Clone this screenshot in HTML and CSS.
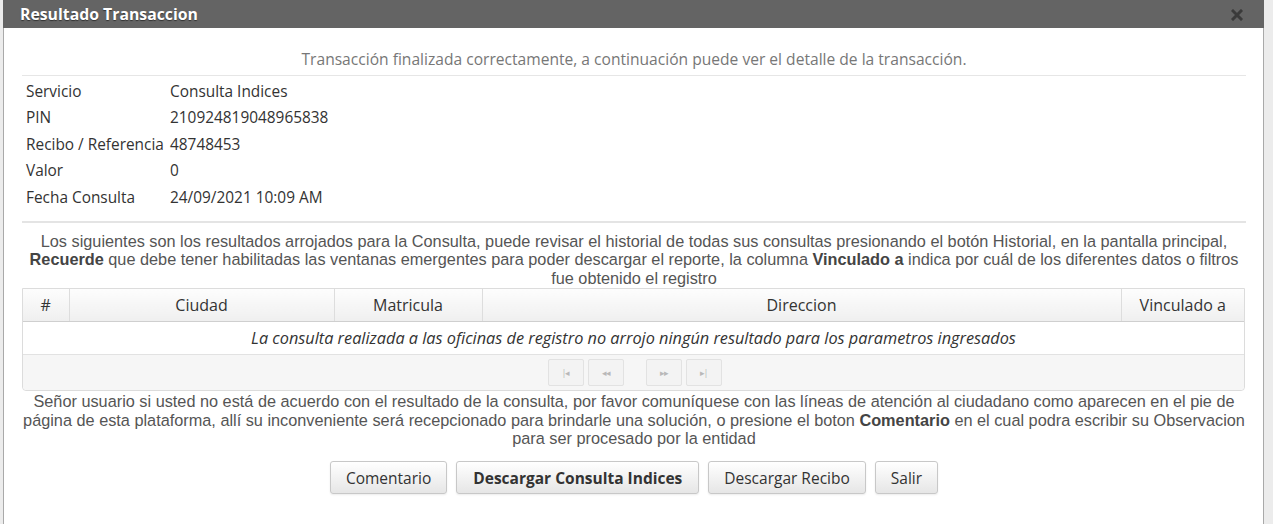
FILE: index.html
```html
<!DOCTYPE html>
<html lang="es">
<head>
<meta charset="utf-8">
<title>Resultado Transaccion</title>
<link rel="stylesheet" href="styles.css">
</head>
<body>
<div class="backdrop">
  <div class="dialog">
    <div class="titlebar">
      <span class="title">Resultado Transaccion</span>
      <span class="close" aria-label="cerrar">
        <svg width="12" height="12" viewBox="0 0 12 12"><path d="M2 2 L10 10 M10 2 L2 10" stroke="#3a3a3a" stroke-width="3" stroke-linecap="square"/></svg>
      </span>
    </div>
    <div class="content">
      <p class="status">Transacción finalizada correctamente, a continuación puede ver el detalle de la transacción.</p>
      <div class="info">
        <div class="row"><span class="label">Servicio</span><span class="value">Consulta Indices</span></div>
        <div class="row"><span class="label">PIN</span><span class="value">210924819048965838</span></div>
        <div class="row"><span class="label">Recibo / Referencia</span><span class="value">48748453</span></div>
        <div class="row"><span class="label">Valor</span><span class="value">0</span></div>
        <div class="row"><span class="label">Fecha Consulta</span><span class="value">24/09/2021 10:09 AM</span></div>
      </div>
      <p class="note">Los siguientes son los resultados arrojados para la Consulta, puede revisar el historial de todas sus consultas presionando el botón Historial, en la pantalla principal,<br><b>Recuerde</b> que debe tener habilitadas las ventanas emergentes para poder descargar el reporte, la columna <b>Vinculado a</b> indica por cuál de los diferentes datos o filtros<br>fue obtenido el registro</p>
      <div class="grid">
        <table>
          <colgroup>
            <col class="c1"><col class="c2"><col class="c3"><col class="c4"><col class="c5">
          </colgroup>
          <thead>
            <tr><th>#</th><th>Ciudad</th><th>Matricula</th><th>Direccion</th><th>Vinculado a</th></tr>
          </thead>
          <tbody>
            <tr><td colspan="5" class="empty">La consulta realizada a las oficinas de registro no arrojo ningún resultado para los parametros ingresados</td></tr>
          </tbody>
        </table>
        <div class="pager">
          <span class="pbtn">|◂</span>
          <span class="pbtn">◂◂</span>
          <span class="pgap"></span>
          <span class="pbtn">▸▸</span>
          <span class="pbtn">▸|</span>
        </div>
      </div>
      <p class="note note2">Señor usuario si usted no está de acuerdo con el resultado de la consulta, por favor comuníquese con las líneas de atención al ciudadano como aparecen en el pie de<br>página de esta plataforma, allí su inconveniente será recepcionado para brindarle una solución, o presione el boton <b>Comentario</b> en el cual podra escribir su Observacion<br>para ser procesado por la entidad</p>
      <div class="buttons">
        <button class="btn">Comentario</button>
        <button class="btn strong">Descargar Consulta Indices</button>
        <button class="btn">Descargar Recibo</button>
        <button class="btn">Salir</button>
      </div>
    </div>
  </div>
</div>
</body>
</html>
```
FILE: styles.css
```css
html, body {
  margin: 0;
  padding: 0;
  height: 100%;
  overflow: hidden;
}
body {
  background: #ececec;
  font-family: "Open Sans", "Liberation Sans", sans-serif;
  color: #333;
}
.backdrop {
  padding-left: 3px;
  height: 100%;
}
.dialog {
  width: 1261px;
  background: #fff;
  border-left: 1px solid #a9a9a9;
  border-right: 1px solid #a9a9a9;
  height: 100%;
  box-sizing: border-box;
}
.titlebar {
  height: 28px;
  background: #646464;
  display: flex;
  align-items: center;
  justify-content: space-between;
  padding: 0 21px 0 17px;
  margin-left: -1px;
  margin-right: -1px;
}
.title {
  color: #fff;
  font-weight: 700;
  font-size: 15.8px;
  text-shadow: 0 1px 1px rgba(0,0,0,0.5);
}
.close {
  display: flex;
  align-items: center;
  padding-top: 2px;
}
.content {
  padding: 0 17px 0 18px;
}
.status {
  margin: 0;
  padding: 21px 0 6px;
  text-align: center;
  color: #777;
  font-size: 15.6px;
  line-height: 20px;
  border-bottom: 1px solid #e6e6e6;
}
.info {
  padding: 2px 0 10px;
  border-bottom: 2px solid #e4e4e4;
}
.row {
  display: flex;
  height: 26.5px;
  align-items: center;
  font-size: 15.4px;
  color: #333;
  padding-left: 4px;
}
.label {
  width: 144px;
}
.note {
  margin: 0 -14px;
  padding-top: 9px;
  font-family: "Liberation Sans", Arial, sans-serif;
  font-size: 16.3px;
  line-height: 18.6px;
  color: #555;
  text-align: center;
  white-space: nowrap;
}
.note b {
  color: #444;
}
.grid {
  width: 1223px;
  margin-top: 1px;
  border: 1px solid #dcdcdc;
  border-radius: 0 0 4px 4px;
  box-sizing: border-box;
}
table {
  width: 1221px;
  border-collapse: collapse;
  table-layout: fixed;
}
col.c1 { width: 46px; }
col.c2 { width: 265px; }
col.c3 { width: 148px; }
col.c4 { width: 639px; }
col.c5 { width: 123px; }
th {
  height: 32px;
  font-weight: 400;
  font-size: 16px;
  color: #333;
  background: linear-gradient(#fdfdfd, #efefef);
  border-right: 1px solid #dddddd;
  border-bottom: 1px solid #cfcfcf;
  padding: 0;
}
th:last-child { border-right: none; }
td.empty {
  height: 32px;
  text-align: center;
  font-style: italic;
  font-size: 16.3px;
  color: #333;
  padding: 0;
  border-bottom: 1px solid #e2e2e2;
}
.pager {
  height: 35px;
  background: #f6f6f6;
  display: flex;
  align-items: center;
  justify-content: center;
  gap: 4px;
  border-radius: 0 0 4px 4px;
  padding-left: 2px;
}
.pbtn {
  width: 36px;
  height: 27px;
  border: 1px solid #e2e2e2;
  border-radius: 2px;
  background: #f3f3f3;
  font-size: 9px;
  color: #b8b8b8;
  display: flex;
  align-items: center;
  justify-content: center;
  letter-spacing: -1px;
  box-sizing: border-box;
}
.pgap {
  width: 14px;
}
.note2 {
  padding-top: 1px;
}
.buttons {
  display: flex;
  justify-content: center;
  gap: 9px;
  padding-top: 13px;
}
.btn {
  font-family: "Open Sans", "Liberation Sans", sans-serif;
  font-size: 15.5px;
  color: #333;
  height: 33px;
  padding: 0 15px;
  background: linear-gradient(#ffffff, #e6e6e6);
  border: 1px solid #c8c8c8;
  border-radius: 3px;
  box-shadow: 0 1px 2px rgba(0,0,0,0.08);
}
.btn.strong {
  font-weight: 700;
  padding: 0 16px;
}
```
